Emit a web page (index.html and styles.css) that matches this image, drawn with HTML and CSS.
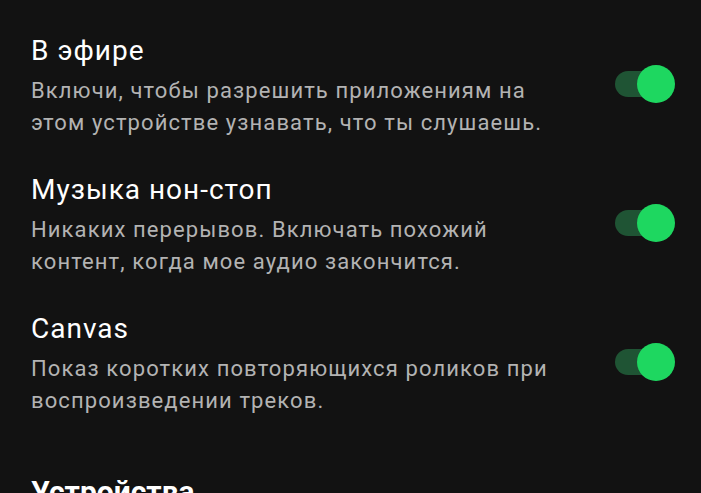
FILE: index.html
```html
<!DOCTYPE html>
<html lang="ru">
<head>
    <meta charset="UTF-8">
    <meta name="viewport" content="width=device-width, initial-scale=1.0">
    <title>Настройки</title>
    <link rel="stylesheet" href="styles.css">
</head>
<body>
    <div class="settings">
        <div class="setting-row">
            <div class="setting-text">
                <div class="setting-title">В эфире</div>
                <div class="setting-desc">Включи, чтобы разрешить приложениям на этом устройстве узнавать, что ты слушаешь.</div>
            </div>
            <label class="switch">
                <input type="checkbox" checked>
                <span class="track"></span>
            </label>
        </div>

        <div class="setting-row">
            <div class="setting-text">
                <div class="setting-title">Музыка нон-стоп</div>
                <div class="setting-desc">Никаких перерывов. Включать похожий контент, когда мое аудио закончится.</div>
            </div>
            <label class="switch">
                <input type="checkbox" checked>
                <span class="track"></span>
            </label>
        </div>

        <div class="setting-row">
            <div class="setting-text">
                <div class="setting-title">Canvas</div>
                <div class="setting-desc">Показ коротких повторяющихся роликов при воспроизведении треков.</div>
            </div>
            <label class="switch">
                <input type="checkbox" checked>
                <span class="track"></span>
            </label>
        </div>

        <h2 class="section-title">Устройства</h2>
    </div>
</body>
</html>
```

FILE: styles.css
```css
/* Settings screen, dark theme */
body {
    margin: 0;
    background-color: #121212;
    color: #fff;
    font-family: Roboto, 'Noto Sans', sans-serif;
}

.settings {
    padding: 34px 26px 0 31px;
}

.setting-row {
    display: flex;
    align-items: center;
    justify-content: space-between;
    margin-bottom: 34px;
}

.setting-text {
    max-width: 540px;
}

.setting-title {
    font-size: 28px;
    line-height: 34px;
    letter-spacing: 1px;
    margin-bottom: 7px;
}

.setting-desc {
    font-size: 22px;
    line-height: 32px;
    letter-spacing: 1.1px;
    color: #b3b3b3;
}

/* Toggle switch */
.switch {
    position: relative;
    width: 60px;
    height: 38px;
    flex-shrink: 0;
    margin-top: -6px;
    cursor: pointer;
}

.switch input {
    display: none;
}

.track {
    position: absolute;
    left: 0;
    right: 4px;
    top: 6px;
    height: 26px;
    border-radius: 13px;
    background-color: #3a3a3a;
}

.track::after {
    content: "";
    position: absolute;
    left: -4px;
    top: -6px;
    width: 38px;
    height: 38px;
    border-radius: 50%;
    background-color: #b3b3b3;
}

.switch input:checked + .track {
    background-color: #1f5434;
}

.switch input:checked + .track::after {
    left: auto;
    right: -4px;
    background-color: #1ed760;
}

.section-title {
    margin: 57px 0 0;
    font-size: 30px;
    font-weight: bold;
}
```
